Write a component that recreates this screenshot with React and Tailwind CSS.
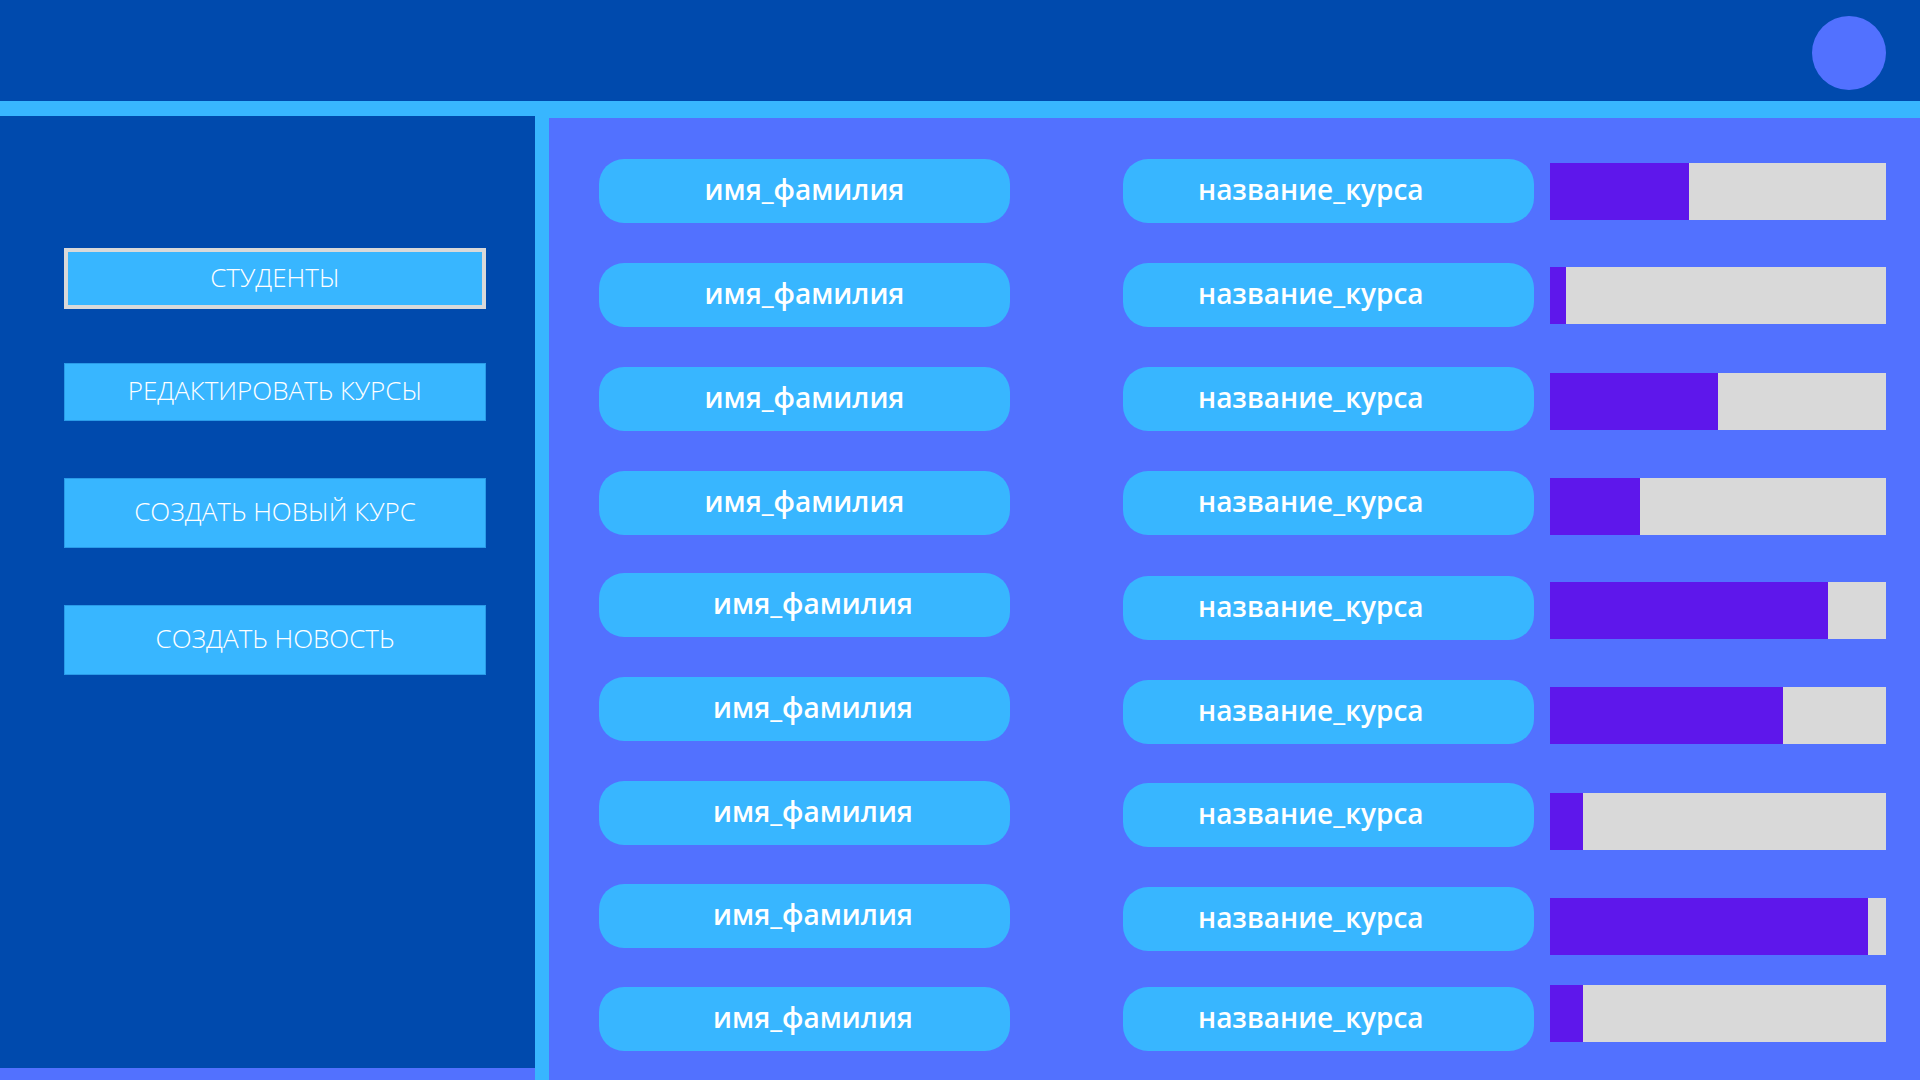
import React from "react";

const rows = [
  { fill: 41.4, shift: false, mt: "mt-0", rt: "mt-0", bt: "mt-[4px]" },
  { fill: 4.8, shift: false, mt: "mt-[40px]", rt: "mt-0", bt: "mt-[4px]" },
  { fill: 50, shift: false, mt: "mt-[40px]", rt: "mt-0", bt: "mt-[6px]" },
  { fill: 26.8, shift: false, mt: "mt-[40px]", rt: "mt-0", bt: "mt-[7px]" },
  { fill: 82.8, shift: true, mt: "mt-[38px]", rt: "mt-[3px]", bt: "mt-[9px]" },
  { fill: 69.3, shift: true, mt: "mt-[40px]", rt: "mt-[3px]", bt: "mt-[10px]" },
  { fill: 9.9, shift: true, mt: "mt-[40px]", rt: "mt-[2px]", bt: "mt-[12px]" },
  { fill: 94.6, shift: true, mt: "mt-[39px]", rt: "mt-[3px]", bt: "mt-[14px]" },
  { fill: 9.8, shift: true, mt: "mt-[39px]", rt: "mt-0", bt: "-mt-[2px]" },
];

function SideButton({ children, active, h }) {
  return (
    <div
      className={
        "w-[422px] flex items-center justify-center bg-[#38B6FF] text-white text-[26px] font-light pb-[3px] " +
        (active ? "border-[4px] border-[#D9D9D9]" : "border border-[#2a9be8]")
      }
      style={{ height: h }}
    >
      {children}
    </div>
  );
}

export default function App() {
  return (
    <div
      className="w-[1920px] h-[1080px] bg-[#38B6FF] flex flex-col overflow-hidden"
      style={{ fontFamily: '"Open Sans", "Noto Sans", sans-serif' }}
    >
      <header className="h-[101px] bg-[#004AAD] flex justify-end items-start pt-[16px] pr-[34px] shrink-0">
        <div className="w-[74px] h-[74px] rounded-full bg-[#5271FF]" />
      </header>
      <div className="flex flex-1 min-h-0">
        <aside className="w-[535px] pt-[15px] flex flex-col shrink-0">
          <div className="h-[952px] bg-[#004AAD] pl-[64px] pt-[132px] flex flex-col">
            <SideButton active h={61}>СТУДЕНТЫ</SideButton>
            <div className="h-[54px]" />
            <SideButton h={58}>РЕДАКТИРОВАТЬ КУРСЫ</SideButton>
            <div className="h-[57px]" />
            <SideButton h={70}>СОЗДАТЬ НОВЫЙ КУРС</SideButton>
            <div className="h-[57px]" />
            <SideButton h={70}>СОЗДАТЬ НОВОСТЬ</SideButton>
          </div>
          <div className="flex-1 bg-[#5271FF]" />
        </aside>
        <div className="w-[14px] shrink-0" />
        <main className="flex-1 mt-[17px] bg-[#5271FF] pl-[50px] pt-[41px] flex flex-col">
          {rows.map((r, i) => (
            <div key={i} className={"flex items-start h-[64px] shrink-0 " + r.mt}>
              <div
                className={
                  "w-[411px] h-[64px] shrink-0 rounded-[25px] bg-[#38B6FF] flex items-center justify-center text-white text-[28px] font-semibold pb-[4px] " +
                  (r.shift ? "pl-[17px]" : "")
                }
              >
                имя_фамилия
              </div>
              <div className="w-[113px] shrink-0" />
              <div
                className={
                  "w-[411px] h-[64px] shrink-0 rounded-[25px] bg-[#38B6FF] flex items-center pl-[75px] text-white text-[28px] font-semibold pb-[4px] " +
                  r.rt
                }
              >
                название_курса
              </div>
              <div className="w-[16px] shrink-0" />
              <div className={"w-[336px] h-[57px] shrink-0 bg-[#D9D9D9] flex " + r.bt}>
                <div className="h-full bg-[#5E17EB]" style={{ width: `${r.fill}%` }} />
              </div>
            </div>
          ))}
        </main>
      </div>
    </div>
  );
}
